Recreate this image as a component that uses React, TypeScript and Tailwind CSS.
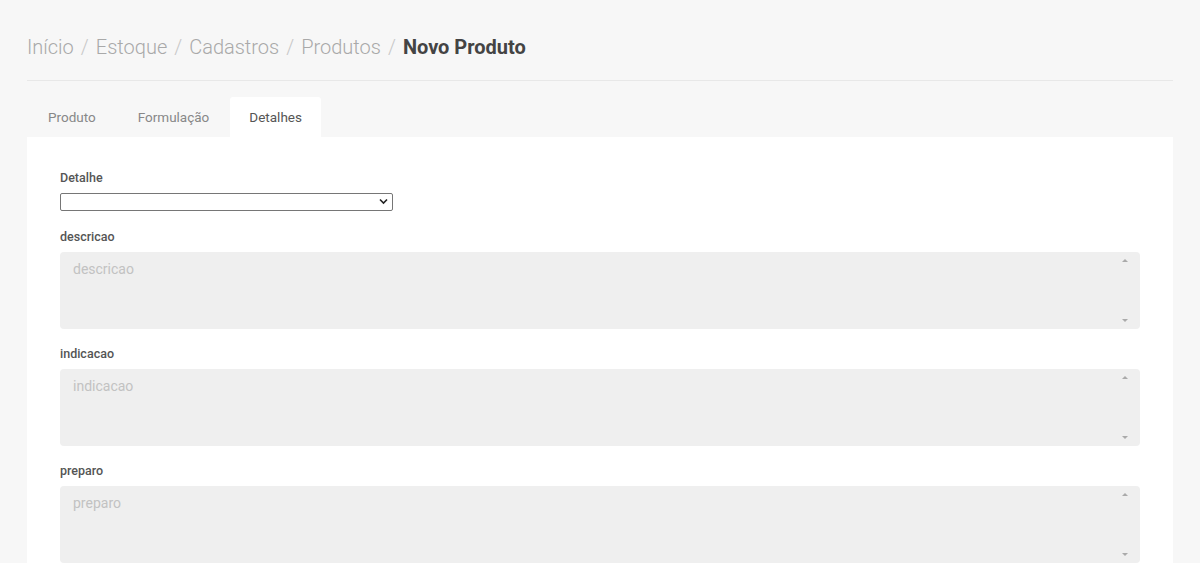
import { useState } from 'react';

const crumbs = ['Início', 'Estoque', 'Cadastros', 'Produtos'];
const tabs = ['Produto', 'Formulação', 'Detalhes'];
const fields = ['descricao', 'indicacao', 'preparo'];

function TextField({ name }: { name: string }) {
    return (
        <div className="mb-[17px]">
            <label className="block text-[12.5px] font-medium text-[#555] mb-[7px] leading-[16px]">{name}</label>
            <div className="relative">
                <textarea
                    disabled
                    placeholder={name}
                    className="block w-full h-[77px] resize-none rounded-[4px] bg-[#efefef] px-[13px] py-[7px] text-[14px] leading-[20px] text-[#555] placeholder:text-[#c2c2c2] outline-none"
                />
                {/* scroll arrows */}
                <span className="absolute right-[12px] top-[7px] w-0 h-0 border-x-[3px] border-x-transparent border-b-[3px] border-b-[#aaa]" />
                <span className="absolute right-[12px] bottom-[7px] w-0 h-0 border-x-[3px] border-x-transparent border-t-[3px] border-t-[#aaa]" />
            </div>
        </div>
    );
}

export default function App() {
    const [activeTab, setActiveTab] = useState('Detalhes');

    return (
        <div className="h-[563px] overflow-hidden bg-[#f7f7f7] font-['Roboto',sans-serif] px-[27px] pt-[33px]">
            <h1 className="text-[20px] leading-[28px] font-light text-[#a9a9a9]">
                {crumbs.map((c) => (
                    <span key={c}>
                        {c}
                        <span className="mx-[7px] text-[#c8c8c8]">/</span>
                    </span>
                ))}
                <span className="font-bold text-[#444]">Novo Produto</span>
            </h1>

            <div className="mt-[19px] border-t border-[#e8e8e8]" />

            <div className="flex mt-[16px]">
                {tabs.map((t) => (
                    <button
                        key={t}
                        onClick={() => setActiveTab(t)}
                        className={
                            t === activeTab
                                ? 'h-[40px] px-[19px] text-[13.5px] text-[#555] bg-white rounded-t-[3px]'
                                : 'h-[40px] px-[21px] text-[13.5px] text-[#888]'
                        }
                    >
                        {t}
                    </button>
                ))}
            </div>

            <div className="bg-white px-[33px] pt-[33px] pb-[10px]">
                <div className="mb-[18px]">
                    <label className="block text-[12.5px] font-medium text-[#555] mb-[7px] leading-[16px]">Detalhe</label>
                    <div className="relative w-[333px]">
                        <select className="block w-full h-[18px] appearance-none border border-[#767676] rounded-[2px] bg-white text-[12px]" />
                        <svg className="absolute right-[5px] top-[5px]" width="9" height="7" viewBox="0 0 9 7">
                            <path d="M1 1.5 L4.5 5 L8 1.5" fill="none" stroke="#222" strokeWidth="1.6" />
                        </svg>
                    </div>
                </div>

                {fields.map((f) => (
                    <TextField key={f} name={f} />
                ))}
            </div>
        </div>
    );
}
